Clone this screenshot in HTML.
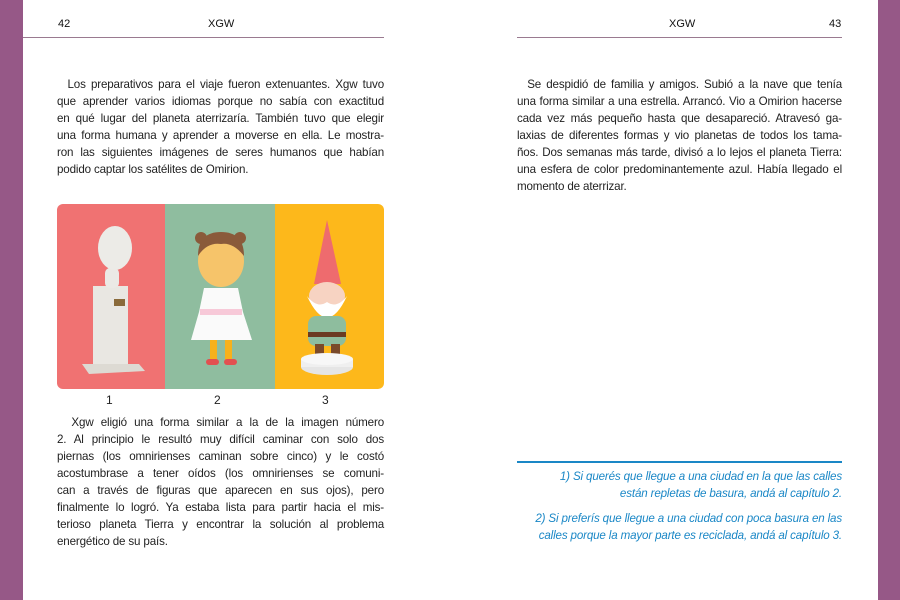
<!DOCTYPE html>
<html><head><meta charset="utf-8"><style>
body{margin:0;width:900px;height:600px;position:relative;background:#fff;font-family:"Liberation Sans",sans-serif;color:#222;overflow:hidden}
.bar{position:absolute;top:0;height:600px;background:#965887}
.hd{position:absolute;top:18px;font-size:11px;color:#111}
.line{position:absolute;top:37px;height:1px;background:#9a7a90}
.p{position:absolute;font-size:11.6px;line-height:17px;letter-spacing:-0.15px}
.p div{text-align:justify;text-align-last:justify;white-space:nowrap}
.p div.l{text-align-last:left}
.blue{position:absolute;color:#1a87c6;font-style:italic;font-size:11.6px;line-height:17px;text-align:right;white-space:nowrap;letter-spacing:-0.15px}
.lab{position:absolute;top:393px;font-size:12px}
</style></head><body>
<div class="bar" style="left:0;width:23px"></div>
<div class="bar" style="left:878px;width:22px"></div>
<div class="hd" style="left:58px">42</div>
<div class="hd" style="left:208px">XGW</div>
<div class="line" style="left:23px;width:361px"></div>
<div class="hd" style="left:669px">XGW</div>
<div class="hd" style="left:829px">43</div>
<div class="line" style="left:517px;width:325px"></div>

<div class="p" style="left:57px;top:76px;width:327px">
<div>&nbsp;&nbsp;Los preparativos para el viaje fueron extenuantes. Xgw tuvo</div>
<div>que aprender varios idiomas porque no sabía con exactitud</div>
<div>en qué lugar del planeta aterrizaría. También tuvo que elegir</div>
<div>una forma humana y aprender a moverse en ella. Le mostra-</div>
<div>ron las siguientes imágenes de seres humanos que habían</div>
<div class="l">podido captar los satélites de Omirion.</div>
</div>

<svg style="position:absolute;left:57px;top:204px" width="327" height="185" viewBox="0 0 327 185">
<defs><clipPath id="c"><rect width="327" height="185" rx="6"/></clipPath></defs>
<g clip-path="url(#c)">
<rect width="109" height="185" fill="#f07272"/>
<rect x="108" width="110" height="185" fill="#8fbd9f"/>
<rect x="218" width="109" height="185" fill="#fdb81b"/>
</g>
<rect x="36" y="82" width="35" height="80" fill="#e9e7e2"/>
<polygon points="25,160 82,160 88,167 32,170" fill="#dddad3"/>
<rect x="48" y="64" width="14" height="20" rx="5" fill="#ebe9e5"/>
<ellipse cx="58" cy="44" rx="17" ry="22" fill="#ecebe7"/>
<rect x="57" y="95" width="11" height="7" fill="#8a6a3a"/>
<circle cx="144" cy="34" r="6" fill="#8a5a3a"/><circle cx="183" cy="34" r="6" fill="#8a5a3a"/>
<ellipse cx="164" cy="57" rx="23" ry="26" fill="#f6c46a"/>
<path d="M141 52 Q141 28 164 28 Q187 28 187 52 Q176 38 164 40 Q150 38 141 52Z" fill="#8a5a3a"/>
<path d="M147 84 H181 L186 108 L195 136 H134 L142 108Z" fill="#fafafa"/>
<rect x="143" y="105" width="42" height="6" fill="#f7c9d8"/>
<rect x="153" y="136" width="7" height="20" fill="#f7b11c"/><rect x="168" y="136" width="7" height="20" fill="#f7b11c"/>
<rect x="149" y="155" width="13" height="6" rx="3" fill="#e25050"/><rect x="167" y="155" width="13" height="6" rx="3" fill="#e25050"/>
<polygon points="270,16 257,80 284,80" fill="#ee6b6e"/>
<ellipse cx="270" cy="92" rx="18" ry="14" fill="#f7d3c2"/>
<path d="M250 92 Q270 135 290 92 Q280 105 270 98 Q260 105 250 92Z" fill="#fff"/>
<rect x="251" y="112" width="38" height="30" rx="8" fill="#8ebd9e"/>
<rect x="251" y="128" width="38" height="5" fill="#6b3a22"/>
<rect x="258" y="140" width="9" height="12" fill="#7a4a2a"/><rect x="274" y="140" width="9" height="12" fill="#7a4a2a"/>
<ellipse cx="270" cy="163" rx="26" ry="8" fill="#e5e5e5"/>
<rect x="244" y="155" width="52" height="8" fill="#efefef"/>
<ellipse cx="270" cy="155" rx="26" ry="6" fill="#f7f7f7"/>
</svg>
<div class="lab" style="left:106px">1</div>
<div class="lab" style="left:214px">2</div>
<div class="lab" style="left:322px">3</div>

<div class="p" style="left:57px;top:414px;width:327px">
<div>&nbsp;&nbsp;Xgw eligió una forma similar a la de la imagen número</div>
<div>2. Al principio le resultó muy difícil caminar con solo dos</div>
<div>piernas (los omnirienses caminan sobre cinco) y le costó</div>
<div>acostumbrase a tener oídos (los omnirienses se comuni-</div>
<div>can a través de figuras que aparecen en sus ojos), pero</div>
<div>finalmente lo logró. Ya estaba lista para partir hacia el mis-</div>
<div>terioso planeta Tierra y encontrar la solución al problema</div>
<div class="l">energético de su país.</div>
</div>

<div class="p" style="left:517px;top:76px;width:325px">
<div>&nbsp;&nbsp;Se despidió de familia y amigos. Subió a la nave que tenía</div>
<div>una forma similar a una estrella. Arrancó. Vio a Omirion hacerse</div>
<div>cada vez más pequeño hasta que desapareció. Atravesó ga-</div>
<div>laxias de diferentes formas y vio planetas de todos los tama-</div>
<div>ños. Dos semanas más tarde, divisó a lo lejos el planeta Tierra:</div>
<div>una esfera de color predominantemente azul. Había llegado el</div>
<div class="l">momento de aterrizar.</div>
</div>

<div style="position:absolute;left:517px;top:461px;width:325px;height:1.5px;background:#1a87c6"></div>
<div class="blue" style="left:500px;top:468px;width:342px">1) Si querés que llegue a una ciudad en la que las calles<br>están repletas de basura, andá al capítulo 2.</div>
<div class="blue" style="left:500px;top:510px;width:342px">2) Si preferís que llegue a una ciudad con poca basura en las<br>calles porque la mayor parte es reciclada, andá al capítulo 3.</div>
</body></html>
